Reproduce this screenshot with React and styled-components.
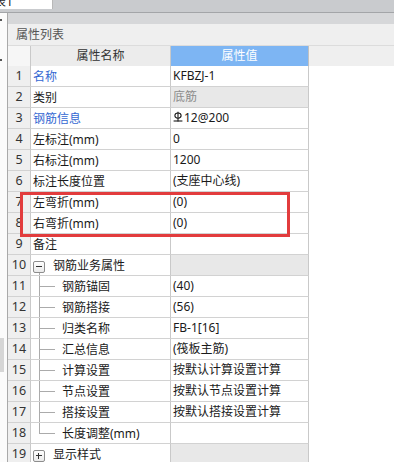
import React from "react";
import styled, { createGlobalStyle, css } from "styled-components";

const GlobalStyle = createGlobalStyle`
  html, body { margin: 0; padding: 0; background: #ffffff; }
  body {
    font-family: "Noto Sans", "Noto Sans CJK SC", sans-serif;
    font-size: 12px;
    color: #1a1a1a;
  }
  * { box-sizing: border-box; }
`;

const Page = styled.div`
  width: 394px;
  height: 462px;
  overflow: hidden;
  display: flex;
  flex-direction: column;
  background: #ffffff;
`;

const TopBar = styled.div`
  height: 13px;
  flex: none;
  background: #c9cbce;
  border-bottom: 1px solid #a3a5a8;
  display: flex;
  align-items: flex-start;
`;

const Tab = styled.div`
  width: 53px;
  height: 9px;
  background: #ffffff;
  border-right: 1px solid #b8b8b8;
  overflow: hidden;
  font-size: 12px;
  line-height: 12px;
  color: #222;
  span {
    display: block;
    margin-top: -4px;
    margin-left: -6px;
  }
`;

const Body = styled.div`
  flex: 1;
  display: flex;
  min-height: 0;
`;

const LeftStrip = styled.div`
  width: 8px;
  flex: none;
  background: #fbfbfb;
  border-right: 1px solid #a9a9a9;
  display: flex;
  flex-direction: column;
  align-items: flex-start;
  padding-top: 6px;
  gap: 38px;
`;

const Mark = styled.div`
  width: 2px;
  height: 2px;
  background: #555;
`;

const StripBlock = styled.div`
  margin-top: auto;
  margin-bottom: 90px;
  width: 4px;
  height: 34px;
  background: #d6d6d6;
`;

const Main = styled.div`
  flex: 1;
  display: flex;
  flex-direction: column;
  position: relative;
  min-width: 0;
`;

const SubBar = styled.div`
  height: 11px;
  flex: none;
  background: #d6d7d9;
`;

const TitleBar = styled.div`
  height: 22px;
  flex: none;
  background: #efefef;
  border-bottom: 1px solid #dcdcdc;
  padding-left: 8px;
  line-height: 21px;
  color: #555;
  font-size: 12px;
`;

const cols = "23px 140px 138px 1fr";

const HeaderRow = styled.div`
  display: grid;
  grid-template-columns: ${cols};
  height: 20px;
  flex: none;
  background: #efefef;
`;

const HeadCell = styled.div`
  line-height: 20px;
  text-align: center;
  border-right: 1px solid #c9c9c9;
  border-bottom: 1px solid #d0d0d0;
  background: #ececec;
  color: #333;
  ${(p) =>
    p.$num &&
    css`
      background: #f6f6f6;
    `}
  ${(p) =>
    p.$active &&
    css`
      background: #7db5f3;
      color: #ffffff;
      border-bottom-color: #7db5f3;
      border-right-color: #c0c0c0;
    `}
`;

const Row = styled.div`
  display: grid;
  grid-template-columns: ${cols};
  height: 21px;
  flex: none;
`;

const NumCell = styled.div`
  background: #efefef;
  border-right: 1px solid #c9c9c9;
  border-bottom: 1px solid #d2d2d2;
  text-align: center;
  line-height: 20px;
  color: #333;
  font-size: 12.5px;
`;

const NameCell = styled.div`
  background: #ffffff;
  border-right: 1px solid #c9c9c9;
  border-bottom: 1px solid #d2d2d2;
  display: flex;
  align-items: center;
  padding-left: ${(p) => (p.$child ? "8px" : p.$group ? "2px" : "2px")};
  color: ${(p) => (p.$link ? "#3468d2" : "#1a1a1a")};
  white-space: nowrap;
  overflow: hidden;
`;

const ValueCell = styled.div`
  background: ${(p) => (p.$disabled ? "#e8e8e8" : "#ffffff")};
  border-right: 1px solid #c9c9c9;
  border-bottom: 1px solid #d2d2d2;
  line-height: 20px;
  padding-left: 2px;
  color: ${(p) => (p.$muted ? "#8c8c8c" : "#1a1a1a")};
  white-space: nowrap;
  overflow: hidden;
  display: flex;
  align-items: center;
`;

const Filler = styled.div`
  background: #ffffff;
`;

const ExpandBox = styled.div`
  position: relative;
  width: 12px;
  height: 12px;
  margin-top: 3px;
  margin-right: 8px;
  border: 1px solid #8d8d8d;
  border-radius: 2px;
  background: linear-gradient(#ffffff, #eaeaea);
  flex: none;
  &::before {
    content: "";
    position: absolute;
    left: 2px;
    top: 4px;
    width: 6px;
    height: 1px;
    background: #333;
  }
  ${(p) =>
    p.$collapsed &&
    css`
      &::after {
        content: "";
        position: absolute;
        left: 4px;
        top: 2px;
        width: 1px;
        height: 6px;
        background: #333;
      }
    `}
  ${(p) =>
    p.$tail &&
    css`
      &::after {
        content: "";
        position: absolute;
        left: 5px;
        top: 11px;
        width: 1px;
        height: 4px;
        background: #ababab;
      }
    `}
`;

const Connector = styled.div`
  position: relative;
  width: 16px;
  height: 20px;
  margin-right: 7px;
  flex: none;
  &::before {
    content: "";
    position: absolute;
    left: 0;
    top: 0;
    width: 1px;
    height: ${(p) => (p.$last ? "10px" : "20px")};
    background: #ababab;
  }
  &::after {
    content: "";
    position: absolute;
    left: 0;
    top: 10px;
    width: 16px;
    height: 1px;
    background: #ababab;
  }
`;

const Highlight = styled.div`
  position: absolute;
  left: 12px;
  top: 179px;
  width: 270px;
  height: 45px;
  border: 3px solid #e23c3d;
  pointer-events: none;
`;

const RebarSym = () => (
  <svg width="10" height="12" viewBox="0 0 10 12" style={{ marginRight: 1, marginTop: -3 }}>
    <ellipse cx="5" cy="4.6" rx="3.1" ry="2.6" fill="none" stroke="#1a1a1a" strokeWidth="1.1" />
    <line x1="5" y1="0.8" x2="5" y2="10.5" stroke="#1a1a1a" strokeWidth="1.1" />
    <line x1="0.6" y1="10" x2="9.4" y2="10" stroke="#1a1a1a" strokeWidth="1.1" />
  </svg>
);

const rows = [
  { n: 1, name: "名称", value: "KFBZJ-1", link: true },
  { n: 2, name: "类别", value: "底筋", disabled: true, muted: true },
  { n: 3, name: "钢筋信息", value: "12@200", link: true, rebar: true },
  { n: 4, name: "左标注(mm)", value: "0" },
  { n: 5, name: "右标注(mm)", value: "1200" },
  { n: 6, name: "标注长度位置", value: "(支座中心线)" },
  { n: 7, name: "左弯折(mm)", value: "(0)" },
  { n: 8, name: "右弯折(mm)", value: "(0)" },
  { n: 9, name: "备注", value: "" },
  { n: 10, name: "钢筋业务属性", value: "", group: "open", disabled: true },
  { n: 11, name: "钢筋锚固", value: "(40)", child: true },
  { n: 12, name: "钢筋搭接", value: "(56)", child: true },
  { n: 13, name: "归类名称", value: "FB-1[16]", child: true },
  { n: 14, name: "汇总信息", value: "(筏板主筋)", child: true },
  { n: 15, name: "计算设置", value: "按默认计算设置计算", child: true },
  { n: 16, name: "节点设置", value: "按默认节点设置计算", child: true },
  { n: 17, name: "搭接设置", value: "按默认搭接设置计算", child: true },
  { n: 18, name: "长度调整(mm)", value: "", child: true, last: true },
  { n: 19, name: "显示样式", value: "", group: "closed", disabled: true },
];

export default function App() {
  return (
    <>
      <GlobalStyle />
      <Page>
        <TopBar>
          <Tab>
            <span>表1</span>
          </Tab>
        </TopBar>
        <Body>
          <LeftStrip>
            <Mark />
            <Mark />
            <StripBlock />
          </LeftStrip>
          <Main>
            <SubBar />
            <TitleBar>属性列表</TitleBar>
            <HeaderRow>
              <HeadCell $num />
              <HeadCell>属性名称</HeadCell>
              <HeadCell $active>属性值</HeadCell>
              <div />
            </HeaderRow>
            {rows.map((r) => (
              <Row key={r.n}>
                <NumCell>{r.n}</NumCell>
                <NameCell $link={r.link} $child={r.child} $group={!!r.group}>
                  {r.group && (
                    <ExpandBox $collapsed={r.group === "closed"} $tail={r.group === "open"} />
                  )}
                  {r.child && <Connector $last={r.last} />}
                  {r.name}
                </NameCell>
                <ValueCell $disabled={r.disabled} $muted={r.muted}>
                  {r.rebar && <RebarSym />}
                  {r.value}
                </ValueCell>
                <Filler />
              </Row>
            ))}
            <Highlight />
          </Main>
        </Body>
      </Page>
    </>
  );
}
